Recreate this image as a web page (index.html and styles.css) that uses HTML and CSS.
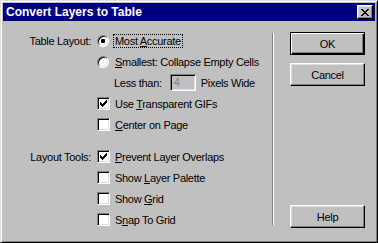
FILE: index.html
```html
<!DOCTYPE html>
<html lang="en">
<head>
    <meta charset="UTF-8">
    <title>Convert Layers to Table</title>
    <link rel="stylesheet" href="styles.css">
</head>
<body>
    <div class="window">
        <div class="titlebar">
            <span class="title">Convert Layers to Table</span>
            <span class="close">
                <svg width="8" height="7" viewBox="0 0 8 7" shape-rendering="crispEdges"><path d="M0 0h2v1h-2zM6 0h2v1h-2zM1 1h2v1h-2zM5 1h2v1h-2zM2 2h4v1h-4zM3 3h2v1h-2zM2 4h4v1h-4zM1 5h2v1h-2zM5 5h2v1h-2zM0 6h2v1h-2zM6 6h2v1h-2z"/></svg>
            </span>
        </div>
        <div class="content">
            <div class="options">
                <div class="group">
                    <div class="row">
                        <span class="label">Table Layout:</span>
                        <span class="radio on"></span>
                        <span class="text focus">Most <u>A</u>ccurate</span>
                    </div>
                    <div class="row">
                        <span class="label"></span>
                        <span class="radio"></span>
                        <span class="text"><u>S</u>mallest: Collapse Empty Cells</span>
                    </div>
                    <div class="row">
                        <span class="label"></span>
                        <span class="indent">Less than:</span>
                        <span class="field">4</span>
                        <span>Pixels Wide</span>
                    </div>
                    <div class="row">
                        <span class="label"></span>
                        <span class="check"><svg width="7" height="7" viewBox="0 0 7 7" shape-rendering="crispEdges"><path d="M6 0h1v1h-1zM5 1h2v1h-2zM0 2h1v1h-1zM4 2h3v1h-3zM0 3h2v1h-2zM3 3h3v1h-3zM0 4h5v1h-5zM1 5h3v1h-3zM2 6h1v1h-1z"/></svg></span>
                        <span class="text">Use <u>T</u>ransparent GIFs</span>
                    </div>
                    <div class="row">
                        <span class="label"></span>
                        <span class="check"></span>
                        <span class="text"><u>C</u>enter on Page</span>
                    </div>
                </div>
                <div class="group">
                    <div class="row">
                        <span class="label">Layout Tools:</span>
                        <span class="check"><svg width="7" height="7" viewBox="0 0 7 7" shape-rendering="crispEdges"><path d="M6 0h1v1h-1zM5 1h2v1h-2zM0 2h1v1h-1zM4 2h3v1h-3zM0 3h2v1h-2zM3 3h3v1h-3zM0 4h5v1h-5zM1 5h3v1h-3zM2 6h1v1h-1z"/></svg></span>
                        <span class="text"><u>P</u>revent Layer Overlaps</span>
                    </div>
                    <div class="row">
                        <span class="label"></span>
                        <span class="check"></span>
                        <span class="text">Show <u>L</u>ayer Palette</span>
                    </div>
                    <div class="row">
                        <span class="label"></span>
                        <span class="check"></span>
                        <span class="text">Show <u>G</u>rid</span>
                    </div>
                    <div class="row">
                        <span class="label"></span>
                        <span class="check"></span>
                        <span class="text">S<u>n</u>ap To Grid</span>
                    </div>
                </div>
            </div>
            <div class="divider"></div>
            <div class="actions">
                <span class="btn default">OK</span>
                <span class="btn cancel">Cancel</span>
                <span class="btn help">Help</span>
            </div>
        </div>
    </div>
</body>
</html>
```

FILE: styles.css
```css
*{ margin: 0; padding: 0; box-sizing: border-box; }

html, body{
    width: 378px;
    height: 243px;
    overflow: hidden;
}
body{
    background: #c0c0c0;
    color: #000;
    font: 11px "Liberation Sans", Arial, sans-serif;
    letter-spacing: -0.3px;
}

.window{
    width: 378px;
    height: 243px;
    display: flex;
    flex-direction: column;
    padding: 2px;
    background: #c0c0c0;
    border: 1px solid;
    border-color: #dfdfdf #000 #000 #dfdfdf;
    box-shadow: inset 1px 1px #fff, inset -1px -1px #808080;
}

.titlebar{
    height: 18px;
    display: flex;
    align-items: center;
    padding: 0 2px 0 3px;
    background: #000080;
}
.title{
    flex: 1;
    color: #fff;
    font-size: 12px;
    font-weight: bold;
    letter-spacing: 0;
}
.close{
    width: 16px;
    height: 14px;
    display: flex;
    align-items: center;
    justify-content: center;
    background: #c0c0c0;
    border: 1px solid;
    border-color: #fff #000 #000 #fff;
    box-shadow: inset -1px -1px #808080, inset 1px 1px #dfdfdf;
}

.content{
    flex: 1;
    display: flex;
}
.options{
    width: 269px;
    padding-top: 9px;
}
.group{
    display: flex;
    flex-direction: column;
}
.group + .group{ margin-top: 11px; }

.row{
    height: 21px;
    display: flex;
    align-items: center;
    white-space: nowrap;
}
.label{
    width: 88px;
    margin-right: 6px;
    text-align: right;
}
.text{
    margin-left: 3px;
    padding: 0 1px;
    line-height: 12px;
    border: 1px solid transparent;
}
.text.focus{ border: 1px dotted #000; }
.indent{ margin-left: 17px; }

.radio{
    width: 12px;
    height: 12px;
    margin-right: 1px;
    display: flex;
    align-items: center;
    justify-content: center;
    border-radius: 50%;
    background: #fff;
    border: 1px solid;
    border-color: #808080 #fff #fff #808080;
    box-shadow: inset 1px 1px #000, inset -1px -1px #dfdfdf;
}
.radio.on::after{
    content: "";
    width: 4px;
    height: 4px;
    border-radius: 1px;
    background: #000;
}

.check{
    width: 13px;
    height: 13px;
    display: flex;
    align-items: center;
    justify-content: center;
    background: #fff;
    border: 1px solid;
    border-color: #808080 #fff #fff #808080;
    box-shadow: inset 1px 1px #000, inset -1px -1px #dfdfdf;
}

.field{
    width: 26px;
    height: 17px;
    margin: 0 5px 0 8px;
    padding-left: 3px;
    line-height: 15px;
    color: #808080;
    background: #c0c0c0;
    border: 1px solid;
    border-color: #808080 #fff #fff #808080;
    box-shadow: inset 1px 1px #000, inset -1px -1px #dfdfdf;
}

.divider{
    width: 2px;
    height: 192px;
    margin-top: 12px;
    border-left: 1px solid #808080;
    border-right: 1px solid #fff;
}

.actions{
    width: 75px;
    margin-left: 16px;
    padding: 11px 0 12px;
    display: flex;
    flex-direction: column;
}
.btn{
    width: 75px;
    height: 23px;
    display: flex;
    align-items: center;
    justify-content: center;
    background: #c0c0c0;
    border: 1px solid;
    border-color: #fff #000 #000 #fff;
    box-shadow: inset -1px -1px #808080, inset 1px 1px #dfdfdf;
}
.btn.default{
    border-color: #000;
    box-shadow: inset 1px 1px #fff, inset -1px -1px #000, inset -2px -2px #808080;
}
.btn.cancel{ margin-top: 8px; }
.btn.help{ margin-top: auto; }
```
